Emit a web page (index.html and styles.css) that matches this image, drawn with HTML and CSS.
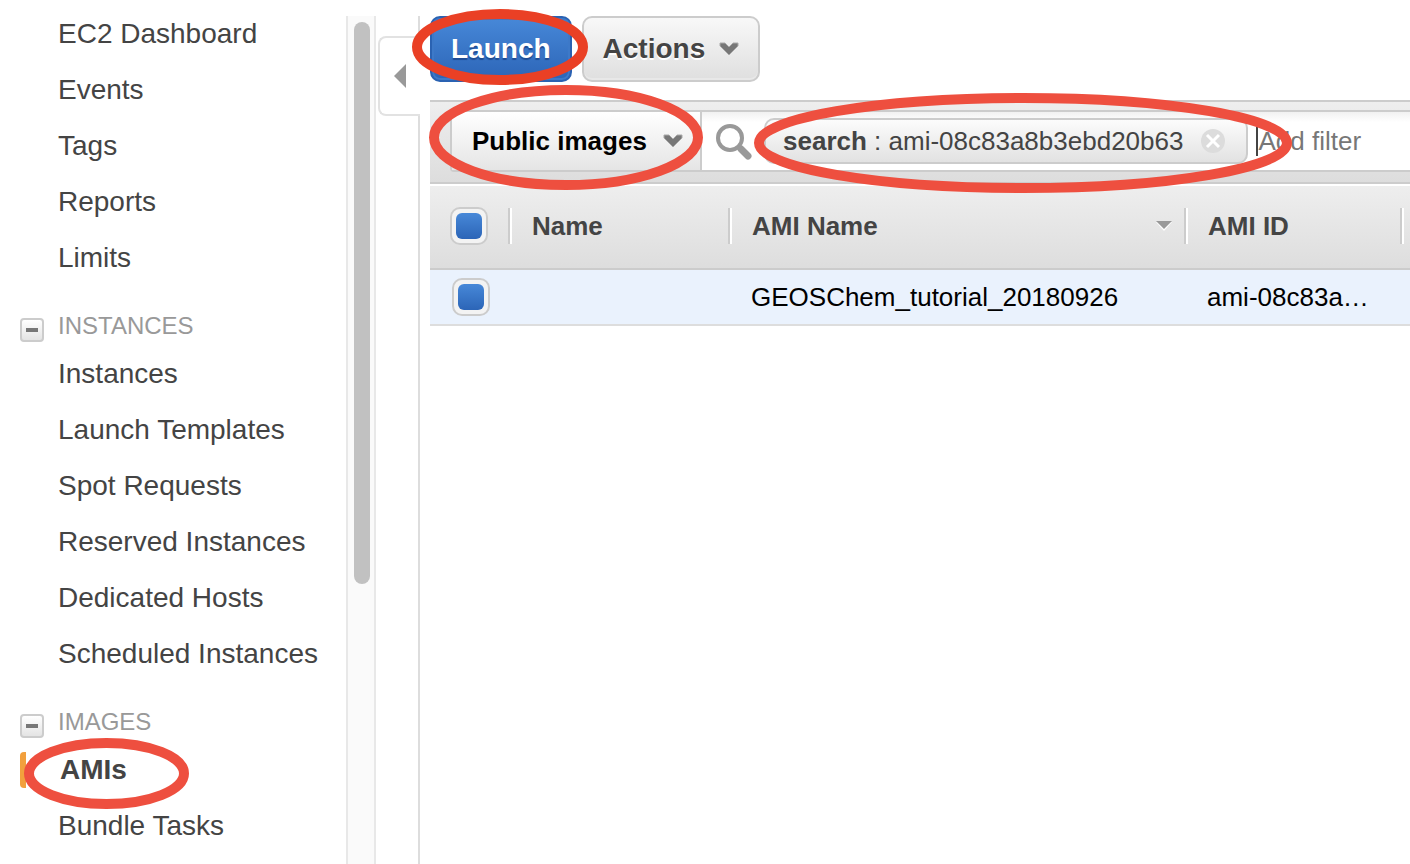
FILE: index.html
```html
<!DOCTYPE html>
<html lang="en">
<head>
<meta charset="utf-8">
<meta name="viewport" content="width=device-width, initial-scale=1">
<title>EC2 - AMIs</title>
<link rel="stylesheet" href="styles.css">
</head>
<body>
<div class="console">
  <nav class="sidebar" aria-label="EC2">
    <ul class="nav-list">
      <li><a class="nav-link" href="#">EC2 Dashboard</a></li>
      <li><a class="nav-link" href="#">Events</a></li>
      <li><a class="nav-link" href="#">Tags</a></li>
      <li><a class="nav-link" href="#">Reports</a></li>
      <li><a class="nav-link" href="#">Limits</a></li>
    </ul>
    <section class="nav-group">
      <div class="group-head">
        <button class="toggle" type="button" aria-label="Collapse Instances"><span class="minus"></span></button>
        <h2 class="group-title">INSTANCES</h2>
      </div>
      <ul class="nav-list">
        <li><a class="nav-link" href="#">Instances</a></li>
        <li><a class="nav-link" href="#">Launch Templates</a></li>
        <li><a class="nav-link" href="#">Spot Requests</a></li>
        <li><a class="nav-link" href="#">Reserved Instances</a></li>
        <li><a class="nav-link" href="#">Dedicated Hosts</a></li>
        <li><a class="nav-link" href="#">Scheduled Instances</a></li>
      </ul>
    </section>
    <section class="nav-group">
      <div class="group-head">
        <button class="toggle" type="button" aria-label="Collapse Images"><span class="minus"></span></button>
        <h2 class="group-title">IMAGES</h2>
      </div>
      <ul class="nav-list">
        <li><a class="nav-link current" href="#" aria-current="page">AMIs</a></li>
        <li><a class="nav-link" href="#">Bundle Tasks</a></li>
      </ul>
    </section>
  </nav>
  <div class="track"><div class="thumb"></div></div>
  <div class="divider">
    <button class="collapse" type="button" aria-label="Collapse sidebar">
      <svg width="12" height="24" viewBox="0 0 12 24"><path d="M12 0v24L0 12z" fill="#999"/></svg>
    </button>
    <div class="divider-line"></div>
  </div>
  <main class="main">
    <div class="actions">
      <button class="btn btn-primary" type="button">Launch</button>
      <button class="btn btn-plain" type="button">Actions
        <svg class="chevron" width="20" height="14" viewBox="0 0 20 14"><path d="M1 1h5l4 4 4-4h5v3l-9 9-9-9z" fill="#777" stroke="#aaa"/></svg>
      </button>
    </div>
    <div class="filter-bar">
      <div class="filter-field">
        <div class="scope">
          <select class="scope-select" aria-label="Image visibility"><option>Public images</option></select>
          <svg class="scope-chevron" width="20" height="14" viewBox="0 0 20 14"><path d="M1 1h5l4 4 4-4h5v3l-9 9-9-9z" fill="#777" stroke="#aaa"/></svg>
        </div>
        <svg class="magnifier" width="36" height="36" viewBox="0 0 36 36" fill="none" stroke="#999"><circle cx="14" cy="14" r="12" stroke-width="4"/><path d="M22 22l3 3" stroke-width="5"/><path d="M25 25l7 7" stroke-width="7" stroke-linecap="round"/></svg>
        <div class="chip">
          <span><b>search</b> : ami-08c83a8b3ebd20b63</span>
          <button class="chip-remove" type="button" aria-label="Remove filter">
            <svg width="24" height="24" viewBox="0 0 24 24"><circle cx="12" cy="12" r="12" fill="#dcdcdc"/><path d="M6 6l12 12M18 6L6 18" stroke="#fff" stroke-width="3"/></svg>
          </button>
        </div>
        <span class="caret"></span>
        <input class="add-filter" type="text" placeholder="Add filter" aria-label="Add filter">
      </div>
    </div>
    <table class="grid">
      <colgroup><col class="col-check"><col class="col-name"><col class="col-ami"><col class="col-id"><col></colgroup>
      <thead>
        <tr>
          <th><div class="head-cell"><input class="check" type="checkbox" checked aria-label="Select all"></div></th>
          <th><div class="head-cell">Name</div></th>
          <th><div class="head-cell">AMI Name
            <button class="sort" type="button" aria-label="Sort by AMI Name"><svg width="16" height="10" viewBox="0 0 16 10"><path d="M0 1h16L8 10z" fill="#fff"/><path d="M0 0h16L8 8z" fill="#999"/></svg></button></div></th>
          <th><div class="head-cell">AMI ID</div></th>
          <th></th>
        </tr>
      </thead>
      <tbody>
        <tr>
          <td class="row-check"><input class="check" type="checkbox" checked aria-label="Select GEOSChem_tutorial_20180926"></td>
          <td></td>
          <td>GEOSChem_tutorial_20180926</td>
          <td>ami-08c83a…</td>
          <td></td>
        </tr>
      </tbody>
    </table>
  </main>
</div>
<svg class="marks" width="1300" height="820" viewBox="0 0 1300 820" fill="none" stroke="#ee4f3f" stroke-width="10" aria-hidden="true">
  <ellipse cx="500" cy="47" rx="83" ry="33" stroke="#ea4025"/>
  <ellipse cx="566" cy="137.500" rx="132" ry="47.500"/>
  <ellipse cx="1023" cy="143" rx="264" ry="45"/>
  <ellipse cx="106.500" cy="773.500" rx="77.500" ry="30.500"/>
</svg>
</body>
</html>
```
FILE: styles.css
```css
* {
  box-sizing: border-box;
}

body {
  margin: 0;
  background: #fff;
  color: #444;
  font-family: "Liberation Sans", Arial, sans-serif;
  font-size: 26px;
}

button,
input,
select {
  font: inherit;
  color: inherit;
  margin: 0;
  padding: 0;
  border: 0;
  background: none;
}

button svg {
  display: block;
}

.console {
  display: flex;
  min-height: 100vh;
  padding-top: 16px;
}

/* Sidebar */
.sidebar {
  flex: 0 0 346px;
  padding-left: 20px;
}

.nav-list {
  display: flex;
  flex-direction: column;
  gap: 20px;
  margin: 0;
  padding: 0;
  list-style: none;
}

.nav-link {
  display: block;
  padding-left: 38px;
  color: #444;
  font-size: 28px;
  line-height: 36px;
  text-decoration: none;
  white-space: nowrap;
}

.nav-link.current {
  padding-left: 34px;
  border-left: 6px solid #f2a03d;
  border-radius: 4px 0 0 4px;
  font-weight: bold;
}

.nav-group {
  margin-top: 36px;
}

.group-head {
  display: flex;
  gap: 14px;
  height: 30px;
  margin-bottom: 14px;
}

.group-title {
  margin: 0;
  color: #999;
  font-size: 24px;
  font-weight: normal;
  line-height: 28px;
}

.toggle {
  display: grid;
  place-items: center;
  align-self: flex-end;
  width: 24px;
  height: 24px;
  border: 2px solid #ccc;
  border-radius: 4px;
  background: linear-gradient(#fff, #e4e4e4);
}

.minus {
  width: 12px;
  height: 4px;
  background: #777;
}

.track {
  flex: 0 0 30px;
  padding: 6px 4px 6px 6px;
  border: solid #e8e8e8;
  border-width: 0 2px;
  background: #fafafa;
}

.thumb {
  width: 16px;
  height: 562px;
  border-radius: 8px;
  background: #c1c1c1;
}

.divider {
  display: flex;
  flex: 0 0 44px;
  flex-direction: column;
  padding-left: 2px;
}

.divider::before {
  content: "";
  height: 20px;
  border-right: 2px solid #ddd;
}

.collapse {
  display: grid;
  align-items: center;
  height: 80px;
  padding-left: 14px;
  border: 2px solid #e2e2e2;
  border-right: 0;
  border-radius: 8px 0 0 8px;
}

.divider-line {
  flex: 1;
  border-right: 2px solid #ddd;
}

/* Main panel */
.main {
  flex: 1;
  min-width: 0;
  padding-left: 10px;
}

.actions {
  display: flex;
  gap: 10px;
  margin-bottom: 18px;
}

.btn {
  display: flex;
  align-items: center;
  gap: 14px;
  height: 66px;
  padding: 0 19px;
  border: 2px solid #ccc;
  border-radius: 10px;
  font-size: 28px;
  font-weight: bold;
}

.btn-primary {
  border-color: #2a62b2;
  background: linear-gradient(#4788d8, #2c65b7);
  box-shadow: inset 0 0 0 2px #3d79c8;
  color: #fff;
  text-shadow: 0 2px 1px #1f4c94;
}

.btn-plain {
  background: linear-gradient(#f8f8f8, #dfdfdf);
  box-shadow: inset 0 -2px 0 #e8e8e8;
  text-shadow: 0 2px 0 #fff;
}

.filter-bar {
  height: 84px;
  padding: 8px 0 0 20px;
  border: solid #ccc;
  border-width: 2px 0;
  background: linear-gradient(#eee, #ddd);
}

.filter-field {
  display: flex;
  align-items: center;
  height: 62px;
  border: 2px solid #ccc;
  border-right: 0;
  border-radius: 4px 0 0 4px;
  background: linear-gradient(#f1f1f1, #fff 10px);
}

.scope {
  display: grid;
  flex: 0 0 250px;
  align-items: center;
  height: 58px;
  border-right: 2px solid #ccc;
  background: linear-gradient(#fff, #e5e5e5);
}

.scope-select {
  grid-area: 1 / 1;
  height: 58px;
  padding-left: 20px;
  appearance: none;
  color: #000;
  font-weight: bold;
}

.scope-chevron {
  grid-area: 1 / 1;
  justify-self: end;
  margin-right: 17px;
  pointer-events: none;
}

.magnifier {
  flex: none;
  margin: 2px 12px 0 14px;
}

.chip {
  display: flex;
  flex: none;
  align-items: center;
  gap: 18px;
  height: 46px;
  padding: 0 21px 0 17px;
  border: 2px solid #ccc;
  border-radius: 10px;
  background: linear-gradient(#fcfcfc, #e2e2e2);
  white-space: nowrap;
}

.caret {
  flex: none;
  width: 2px;
  height: 30px;
  margin-left: 8px;
  background: #444;
}

.add-filter {
  flex: 1;
  min-width: 0;
  height: 46px;
}

.add-filter::placeholder {
  color: #777;
  opacity: 1;
}

/* Image table */
.grid {
  width: 100%;
  margin-top: 2px;
  border-collapse: separate;
  border-spacing: 0;
  table-layout: fixed;
}

.col-check {
  width: 82px;
}

.col-name {
  width: 220px;
}

.col-ami {
  width: 456px;
}

.col-id {
  width: 216px;
}

.grid th,
.grid td {
  padding: 0;
  text-align: left;
  white-space: nowrap;
}

.grid thead {
  background: linear-gradient(#eee, #ddd);
}

.grid th {
  height: 84px;
  padding-top: 22px;
  border-bottom: 2px solid #ccc;
  vertical-align: top;
}

.head-cell {
  display: flex;
  align-items: center;
  justify-content: space-between;
  height: 36px;
  margin-right: 2px;
  padding: 0 12px 0 20px;
  border-right: 2px solid #ccc;
  box-shadow: 2px 0 0 #fff;
}

.grid td {
  height: 56px;
  padding-left: 19px;
  border-bottom: 2px solid #ddd;
  background: #eaf2fd;
  color: #000;
}

.grid .row-check {
  padding-left: 22px;
}

.check {
  display: block;
  width: 38px;
  height: 38px;
  padding: 4px;
  appearance: none;
  border: 2px solid #ccc;
  border-radius: 10px;
  background: #f3f3f3;
}

.check:checked::before {
  content: "";
  display: block;
  width: 26px;
  height: 26px;
  border-radius: 6px;
  background: linear-gradient(#4788d8, #2c65b7);
}

/* Hand-drawn highlights */
.marks {
  position: absolute;
  top: 0;
  left: 0;
  pointer-events: none;
}
```
